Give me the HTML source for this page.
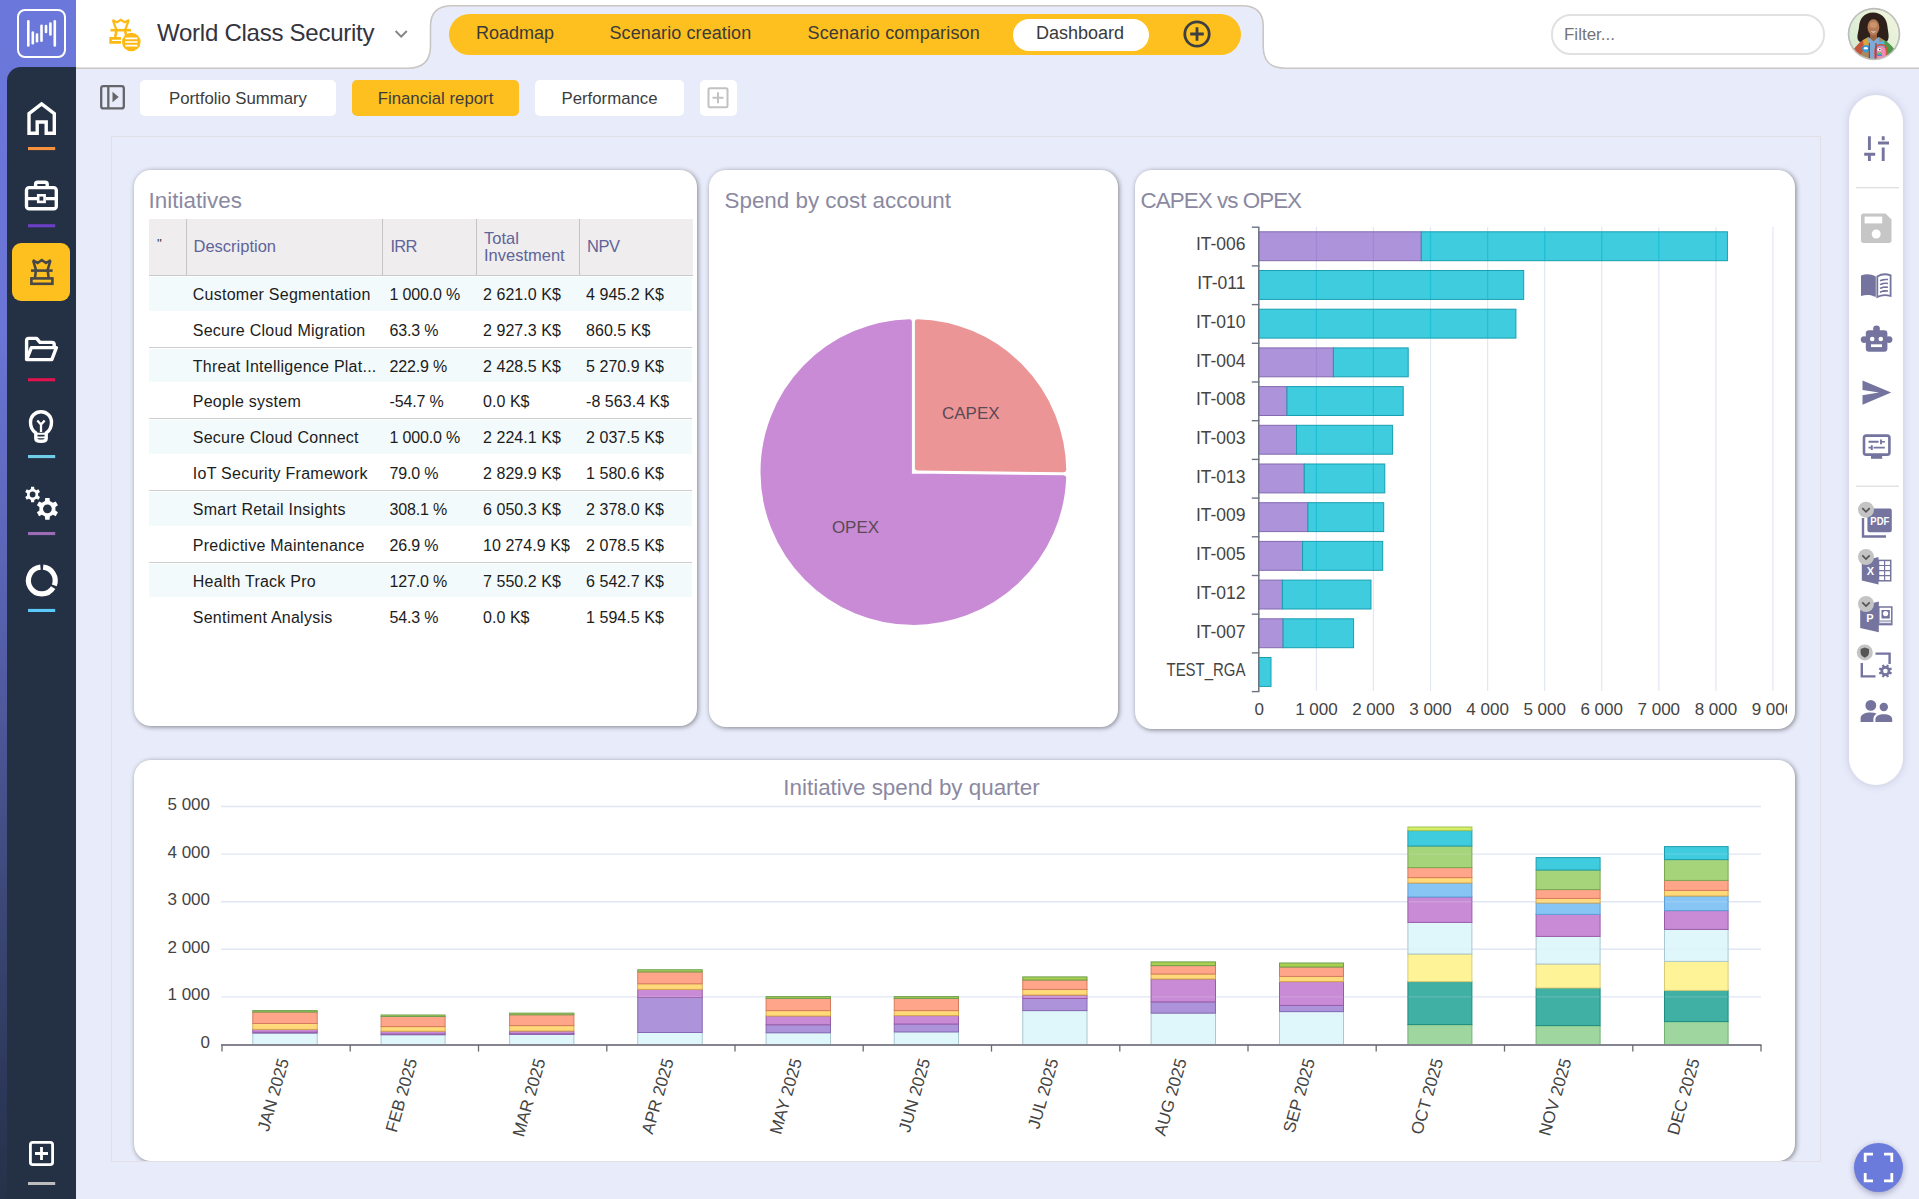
<!DOCTYPE html>
<html lang="en"><head><meta charset="utf-8"><title>World Class Security - Dashboard</title>
<style>
*{box-sizing:border-box;margin:0;padding:0}
html,body{width:1919px;height:1199px;overflow:hidden}
body{background:#e8ebfa;font-family:"Liberation Sans",sans-serif;color:#222;position:relative}
.abs{position:absolute}
#leftstrip{left:0;top:0;width:76px;height:1199px;background:linear-gradient(180deg,#6b77da 0%,#6a75d5 28%,#5962b0 50%,#3d4878 75%,#2b3757 92%,#263248 100%)}
#navpanel{left:7px;top:67px;width:69px;height:1132px;background:#243043;border-top-left-radius:14px}
#logo{left:17px;top:9px;width:49px;height:49px;border:2px solid #fff;border-radius:8px}
#header{left:76px;top:0;width:1843px;height:68px;background:#fff}
#title{left:157px;top:18px;font-size:24px;color:#34343e;white-space:nowrap;letter-spacing:-0.25px;line-height:30px}
.navitem{font-size:18px;color:#3a3a3a;white-space:nowrap;line-height:22px;top:22px}
#pill{left:448.8px;top:14.4px;width:792.6px;height:41.1px;border-radius:20.6px;background:#fdc01e}
#dash{left:1012.8px;top:18.6px;width:136.2px;height:32.8px;border-radius:16.4px;background:#fff}
#filter{left:1550.6px;top:13.7px;width:274px;height:41px;border:2px solid #e1e1e1;border-radius:20px;background:#fff}
#filter span{position:absolute;left:11.4px;top:9px;font-size:17px;color:#757575}
.tab{top:79.6px;height:36.8px;border-radius:5px;background:#fff;font-size:16.8px;color:#3c3c3c;text-align:center;line-height:38.2px;white-space:nowrap}
.tab.act{background:#fdc01e}
#container{left:111px;top:136px;width:1710px;height:1026px;border:1px solid #e1e1e5;background:#e8ebfa;overflow:hidden}
.card{background:#fff;border-radius:17px;box-shadow:1px 1px 5px rgba(0,0,0,.45)}
.ctitle{font-size:22.4px;color:#8b89a1;white-space:nowrap;line-height:26px}
#rtool{left:1849px;top:95px;width:54px;height:690px;border-radius:27px;background:#fff;box-shadow:0 0 9px rgba(110,110,150,.28)}
#fab{left:1854px;top:1143px;width:49px;height:49px;border-radius:25px;background:#6b7bdb;box-shadow:0 2px 6px rgba(60,60,100,.4)}
.ul{left:27px;width:28px;height:3px}
table{border-collapse:collapse}
.th{position:absolute;font-size:16.5px;color:#5f6499;line-height:17px;white-space:nowrap}
.tr{position:absolute;left:15px;width:543px}
.td{position:absolute;font-size:16px;color:#1c1c1c;white-space:nowrap;line-height:20px}
.td.n{letter-spacing:.05px}.td.t{letter-spacing:.25px}.td.p{letter-spacing:-.18px}
svg text{font-family:"Liberation Sans",sans-serif}
</style></head><body>
<div id="leftstrip" class="abs"></div>
<div id="navpanel" class="abs"></div>
<div id="logo" class="abs"></div>
<svg class="abs" style="left:0;top:0" width="76" height="68"><rect x="27.0" y="20.0" width="2.6" height="26.8" rx="1.3" fill="#fff"/><rect x="31.5" y="31.2" width="2.6" height="13.4" rx="1.3" fill="#fff"/><rect x="35.7" y="33.3" width="2.6" height="9.2" rx="1.3" fill="#fff"/><rect x="40.2" y="24.6" width="2.6" height="17.4" rx="1.3" fill="#fff"/><rect x="44.7" y="24.8" width="2.6" height="8.5" rx="1.3" fill="#fff"/><rect x="49.1" y="22.3" width="2.6" height="13.4" rx="1.3" fill="#fff"/><rect x="53.5" y="20.0" width="2.6" height="26.8" rx="1.3" fill="#fff"/></svg>
<div id="header" class="abs"></div>
<svg class="abs" style="left:0;top:0" width="1919" height="72">
<path d="M76,68.2 L408,68.2 C424,68.2 430.5,60 430.5,46 L430.5,26 C430.5,12 438,5.8 452,5.8 L1242,5.8 C1256,5.8 1263.2,12 1263.2,26 L1263.2,46 C1263.2,60 1269,68.2 1285,68.2 L1919,68.2 L1919,72 L76,72 Z" fill="#e8ebfa"/>
<path d="M76,68.2 L408,68.2 C424,68.2 430.5,60 430.5,46 L430.5,26 C430.5,12 438,5.8 452,5.8 L1242,5.8 C1256,5.8 1263.2,12 1263.2,26 L1263.2,46 C1263.2,60 1269,68.2 1285,68.2 L1919,68.2" fill="none" stroke="#c9c6c3" stroke-width="1.6"/>
</svg>
<svg class="abs" style="left:105px;top:14px" width="40" height="40" viewBox="105 14 40 40">
<g fill="none" stroke="#fdb913" stroke-width="2.6" stroke-linejoin="miter">
<path d="M113,20.600 L116.300,29.500 M128.600,20.600 L125.300,29.500 M112.400,20 L117,22.300 L120.800,19.900 L124.600,22.300 L129.200,20" stroke-width="2.200"/>
<path d="M110.5,30.2 L131,30.2"/>
<path d="M116.4,31 L115,38.2 M125,31 L126.4,36"/>
<path d="M121,38.4 L110.6,38.4 L110.6,42.4 L121,42.4"/>
</g>
<circle cx="131.3" cy="42" r="9.3" fill="#fdb913"/>
<g stroke="#fff" stroke-width="1.7"><path d="M125.2,38.4H137.4M125,42H137.6M125.2,45.6H137.4"/></g>
</svg>
<div id="title" class="abs">World Class Security</div>
<svg class="abs" style="left:393px;top:27px" width="16" height="14"><path d="M2.600,4 L8.200,9.600 L13.800,4" fill="none" stroke="#858585" stroke-width="2"/></svg>
<div id="pill" class="abs"></div><div id="dash" class="abs"></div>
<div class="abs navitem" style="left:476px">Roadmap</div>
<div class="abs navitem" style="left:609.5px;letter-spacing:.1px">Scenario creation</div>
<div class="abs navitem" style="left:807.5px;letter-spacing:.18px">Scenario comparison</div>
<div class="abs navitem" style="left:1036px">Dashboard</div>
<svg class="abs" style="left:1180.5px;top:18.400px" width="32" height="32"><circle cx="16" cy="16" r="12.200" fill="none" stroke="#3d4043" stroke-width="2.800"/><path d="M16,9.200V22.800M9.200,16H22.800" stroke="#3d4043" stroke-width="2.800"/></svg>
<div id="filter" class="abs"><span>Filter...</span></div>
<svg class="abs" style="left:1846.6px;top:6.9px" width="54" height="54" viewBox="0 0 54 54">
<defs><clipPath id="av"><circle cx="27" cy="27" r="24.6"/></clipPath>
<linearGradient id="avbg" x1="0" y1="1" x2="1" y2="0"><stop offset="0" stop-color="#cfe9cf"/><stop offset="1" stop-color="#f5f6dd"/></linearGradient></defs>
<circle cx="27" cy="27" r="26.3" fill="#bdbdbd"/>
<g clip-path="url(#av)">
<rect width="54" height="54" fill="url(#avbg)"/>
<path d="M26,5.600 C35,5.600 40,12 40.500,20 C41,25 42.500,29 41,33 C39,37 33,37 26.500,37 C20,37 13,37 11,33 C9.500,29 11.500,25 12,20 C12.500,12 17,5.600 26,5.600Z" fill="#2e211b"/>
<rect x="23" y="26" width="7" height="8" fill="#9a6544"/>
<ellipse cx="26.400" cy="20.300" rx="5.900" ry="8.100" fill="#b57c57"/>
<ellipse cx="26.400" cy="18" rx="3.600" ry="3" fill="#c9946c"/>
<path d="M23.800,24.300 Q26.400,26.800 29,24.300 Q26.400,25.200 23.800,24.300Z" fill="#fff"/>
<path d="M7,42 C12,36 18,31 21.500,30 L26.500,34.500 L31.500,30 C35,31 42,36 47,42 L47,54 L7,54 Z" fill="#a8895f"/>
<path d="M21.500,30 L26.500,34.500 L31.500,30 L33,37 L29,54 L24,54 L20,37 Z" fill="#7fa9d6"/>
<path d="M7,42 C10,38 13,35 16,33 L18,41 L12,50 Z" fill="#c4553c"/>
<path d="M47,42 C44,38 41,35 37,33 L36,40 L42,49 Z" fill="#4f9a4a"/>
<path d="M31,36 L37,33 L38,40 L32,42Z" fill="#58b4dc"/>
<path d="M16,33 L21,31 L22,38 L17,41Z" fill="#d9a63c"/>
<circle cx="18.800" cy="41.600" r="3.600" fill="#2f9fe0"/><ellipse cx="18.800" cy="41.300" rx="2" ry="1.300" fill="#fff"/>
<path d="M29.500,54 L29.500,43 C29.500,38 38.500,38 38.500,43 L38.500,54Z" fill="#f08ab0"/>
<path d="M28,54 L28,43 C28,36 40,36 40,43 L40,54" fill="none" stroke="#d94f3c" stroke-width="1.400"/>
<ellipse cx="32.400" cy="42.600" rx="2" ry="1.700" fill="#fff"/><circle cx="32.800" cy="42.600" r=".8" fill="#333"/>
<rect x="30" y="45.500" width="5" height="3.500" fill="#5cc46a"/><rect x="30" y="47.500" width="5" height="1.500" fill="#4a7fe0"/>
<path d="M22.300,36 V54 M29,36 V54" stroke="#9a2f3a" stroke-width="1.100"/>
</g></svg>
<svg class="abs" style="left:98px;top:83px" width="30" height="28"><rect x="3.2" y="3.2" width="22.6" height="22.2" rx="2.2" fill="none" stroke="#636569" stroke-width="2.3"/><path d="M10.3,3V25.4" stroke="#666" stroke-width="2.3"/><path d="M14.5,8.7 L20.7,14 L14.5,19.3Z" fill="#666"/></svg>
<div class="abs tab" style="left:140px;width:196px">Portfolio Summary</div>
<div class="abs tab act" style="left:352px;width:167px">Financial report</div>
<div class="abs tab" style="left:535px;width:149px">Performance</div>
<div class="abs tab" style="left:700px;width:36.5px"></div>
<svg class="abs" style="left:706px;top:86px" width="24" height="24"><rect x="2.5" y="2.300" width="19" height="19" rx="1.500" fill="none" stroke="#c2c2c2" stroke-width="2"/><path d="M12,6.300V17.300M6.500,11.800H17.500" stroke="#c2c2c2" stroke-width="2"/></svg>
<svg class="abs" style="left:0;top:68px" width="76" height="1131" viewBox="0 68 76 1131">
<path d="M29,133.2 V113.6 L41.6,103.8 L54.3,113.6 V133.2 H46.2 V122 H37.2 V133.2 Z" fill="none" stroke="#fff" stroke-width="3.4" stroke-linejoin="miter"/>
<g fill="none" stroke="#fff" stroke-width="3.4"><rect x="26.5" y="187.6" width="29.8" height="21.2" rx="2.6"/><path d="M35.6,187 V184.2 C35.6,182.8 36.4,182.2 37.6,182.2 H45.2 C46.4,182.2 47.2,182.8 47.2,184.2 V187"/><path d="M27,198.6 H37 M46,198.6 H56"/><rect x="38.2" y="195.3" width="6.4" height="6.6" stroke-width="2.6"/></g>
<rect x="12" y="243" width="58" height="58" rx="9" fill="#fdc01e"/>
<g fill="none" stroke="#474747" stroke-width="2.6"><path d="M33.2,260.6 L36,270 M50.4,260.6 L47.6,270 M32.8,260 L37.6,263 L41.8,260 L46,263 L50.8,260"/><path d="M31,270.6 H52.6"/><path d="M35.8,271.4 L35,277.6 M47.8,271.4 L48.6,277.6"/><rect x="31.4" y="278.4" width="21" height="5.4"/></g>
<g fill="none" stroke="#fff" stroke-width="3.4" stroke-linejoin="round"><path d="M26.6,359.6 V340.6 C26.6,339.2 27.4,338.4 28.8,338.4 H36.6 L40,342.4 H52 C53.4,342.4 54.2,343.2 54.2,344.6 V347.4"/><path d="M26.6,359.6 L31.4,347.6 H56.4 L51.8,359.6 Z"/></g>
<g fill="none" stroke="#fff" stroke-width="3.4" stroke-width="3"><path d="M35.8,433 C32,430.5 30.5,427 30.5,422.3 C30.5,416.3 35.2,411.8 41,411.8 C46.8,411.8 51.5,416.3 51.5,422.3 C51.5,427 50,430.5 46.2,433 V438.4 C46.2,440.3 44.5,441.2 41,441.2 C37.5,441.2 35.8,440.3 35.8,438.4 Z" stroke-linejoin="round"/><path d="M36,433.8 H46 M37,437.4 H45" stroke-width="1.9"/><path d="M41,432 V424.6 M37.3,420.5 L41,424.6 L44.7,420.5" stroke-width="2.3"/></g>
<path d="M31.06,486.85 L34.14,486.85 L34.30,489.06 L36.46,490.30 L38.45,489.34 L39.99,492.01 L38.16,493.26 L38.16,495.74 L39.99,496.99 L38.45,499.66 L36.46,498.70 L34.30,499.94 L34.14,502.15 L31.06,502.15 L30.90,499.94 L28.74,498.70 L26.75,499.66 L25.21,496.99 L27.04,495.74 L27.04,493.26 L25.21,492.01 L26.75,489.34 L28.74,490.30 L30.90,489.06Z M29.70,494.50 a2.90,2.90 0 1,0 5.80,0 a2.90,2.90 0 1,0 -5.80,0Z" fill="#fff" fill-rule="evenodd"/>
<path d="M45.21,497.92 L49.59,497.92 L49.85,500.98 L52.95,502.76 L55.73,501.46 L57.92,505.26 L55.40,507.01 L55.40,510.59 L57.92,512.34 L55.73,516.14 L52.95,514.84 L49.85,516.62 L49.59,519.68 L45.21,519.68 L44.95,516.62 L41.85,514.84 L39.07,516.14 L36.88,512.34 L39.40,510.59 L39.40,507.01 L36.88,505.26 L39.07,501.46 L41.85,502.76 L44.95,500.98Z M43.00,508.80 a4.40,4.40 0 1,0 8.80,0 a4.40,4.40 0 1,0 -8.80,0Z" fill="#fff" fill-rule="evenodd"/>
<path d="M43.15,567.17 A13.4,13.4 0 0,1 54.31,585.30" fill="none" stroke="#fff" stroke-width="5.15"/>
<path d="M53.16,587.60 A13.4,13.4 0 1,1 40.45,567.17" fill="none" stroke="#fff" stroke-width="5.15"/>
<rect x="28" y="147.0" width="27.2" height="3.1" fill="#f5923e"/>
<rect x="28" y="224.2" width="27.2" height="3.1" fill="#6b3fc6"/>
<rect x="28" y="378.2" width="27.2" height="3.1" fill="#e2134f"/>
<rect x="28" y="455.0" width="27.2" height="3.1" fill="#6fcde8"/>
<rect x="28" y="532.0" width="27.2" height="3.1" fill="#9b6bb5"/>
<rect x="28" y="608.9" width="27.2" height="3.1" fill="#5bc8fa"/>
<rect x="30.4" y="1142.4" width="22.2" height="22.2" rx="2.4" fill="none" stroke="#fff" stroke-width="2.8"/><path d="M41.5,1147 V1160 M35,1153.5 H48" stroke="#fff" stroke-width="2.8"/>
<rect x="28" y="1182" width="27.2" height="3" fill="#bdbdbd"/>
</svg>
<div id="rtool" class="abs"></div>
<svg class="abs" style="left:1849px;top:95px" width="54" height="690" viewBox="1849 95 54 690">
<g stroke="#74749f" stroke-width="2.9" fill="none"><path d="M1869.4,136.2 V150 M1869.4,155 V161 M1864.2,154.2 H1875.2 M1883.2,136.2 V140.2 M1883.2,147.4 V161 M1878,143 H1889"/></g>
<rect x="1856" y="187" width="43" height="1.3" fill="#dedede"/>
<path d="M1863.5,213.5 H1885.5 L1891.5,219.5 V240.5 C1891.5,242 1890.5,243 1889,243 H1863.5 C1862,243 1861,242 1861,240.5 V216 C1861,214.500 1862,213.500 1863.500,213.500 Z" fill="#c6c6c6"/><rect x="1864.600" y="216.600" width="17.600" height="6.800" fill="#fff"/><circle cx="1876.200" cy="234" r="4.500" fill="#fff"/>
<path d="M1861,275.5 C1866,273.500 1871,273.800 1875.800,276.500 V297 C1871,294.600 1866,294.400 1861,296 Z" fill="#74749f"/><path d="M1877.300,276.500 C1881.500,273.900 1886,273.600 1890.600,275.400 V296 C1886,294.500 1881.500,294.700 1877.300,297 Z" fill="none" stroke="#74749f" stroke-width="1.800"/><g stroke="#74749f" stroke-width="1.500"><path d="M1880,280.800 C1882.500,279.600 1885,279.200 1888,279.600 M1880,284.600 C1882.500,283.400 1885,283 1888,283.400 M1880,288.400 C1882.500,287.200 1885,286.800 1888,287.200 M1880,292.200 C1882.500,291 1885,290.600 1888,291"/></g>
<g fill="#74749f"><circle cx="1876.5" cy="329" r="3.4"/><rect x="1865.8" y="330.2" width="21.6" height="21.6" rx="3.2"/><circle cx="1864.2" cy="339.6" r="3.4"/><circle cx="1889" cy="339.6" r="3.4"/></g><circle cx="1872.2" cy="339" r="2.3" fill="#fff"/><circle cx="1880.800" cy="339" r="2.300" fill="#fff"/><rect x="1871" y="344.300" width="11" height="2.800" fill="#fff"/>
<path d="M1862.500,380.400 L1891.200,392.600 L1862.500,404.800 L1862.500,395.200 L1879,392.600 L1862.500,390 Z" fill="#74749f"/>
<g fill="none" stroke="#74749f"><rect x="1864" y="435.6" width="25.4" height="19" rx="2.2" stroke-width="2.6"/><path d="M1868.5,441.800 H1878.600 M1868.500,447.600 H1871 M1873.500,447.600 H1884.800" stroke-width="1.900"/><path d="M1881,439.400 V444.200 M1871.800,445.200 V450" stroke-width="1.900"/><path d="M1882,441.800 H1884.800" stroke-width="1.600"/></g><rect x="1871" y="455" width="11.200" height="3.800" fill="#74749f"/>
<rect x="1856" y="485.600" width="43" height="1.300" fill="#dedede"/>
<rect x="1867.400" y="508.600" width="24.400" height="23.600" rx="2.200" fill="#74749f"/><path d="M1863,518 V536.500 H1886" fill="none" stroke="#74749f" stroke-width="2.400"/><text x="1879.800" y="525.200" font-size="10.500" font-weight="bold" fill="#fff" text-anchor="middle" textLength="19" lengthAdjust="spacingAndGlyphs">PDF</text>
<path d="M1861.800,561.200 L1878.500,557 V584.400 L1861.800,580.600 Z" fill="#74749f"/><rect x="1878.500" y="560.400" width="12.200" height="20.400" fill="none" stroke="#74749f" stroke-width="1.500"/><path d="M1878.500,565.500 H1890.700 M1878.500,570.600 H1890.700 M1878.500,575.700 H1890.700 M1884.600,560.400 V580.800" stroke="#74749f" stroke-width="1.200"/><text x="1870.400" y="575.400" font-size="11" font-weight="bold" fill="#fff" text-anchor="middle">X</text>
<path d="M1860.200,606.200 L1878.800,601.600 V632.200 L1860.200,628 Z" fill="#74749f"/><rect x="1878.800" y="607" width="13" height="17.600" fill="none" stroke="#74749f" stroke-width="1.500"/><path d="M1881.500,610 H1889.800 V618.500 H1881.500Z" fill="#74749f"/><circle cx="1885.600" cy="613.600" r="2.600" fill="#fff"/><path d="M1879.500,621 H1891 M1879.500,623.300 H1891" stroke="#74749f" stroke-width="1"/><text x="1869.800" y="621.600" font-size="11" font-weight="bold" fill="#fff" text-anchor="middle">P</text>
<path d="M1875.500,653.600 H1889.600 V664 M1861.800,663 V676.400 H1875.500" fill="none" stroke="#74749f" stroke-width="2.400"/><path d="M1892.02,672.57 L1891.21,674.54 L1889.45,673.93 L1888.35,675.04 L1888.97,676.79 L1887.01,677.61 L1886.20,675.94 L1884.63,675.94 L1883.83,677.62 L1881.86,676.81 L1882.47,675.05 L1881.36,673.95 L1879.61,674.57 L1878.79,672.61 L1880.46,671.80 L1880.46,670.23 L1878.78,669.43 L1879.59,667.46 L1881.35,668.07 L1882.45,666.96 L1881.83,665.21 L1883.79,664.39 L1884.60,666.06 L1886.17,666.06 L1886.97,664.38 L1888.94,665.19 L1888.33,666.95 L1889.44,668.05 L1891.19,667.43 L1892.01,669.39 L1890.34,670.20 L1890.34,671.77Z M1883.10,671.00 a2.30,2.30 0 1,0 4.60,0 a2.30,2.30 0 1,0 -4.60,0Z" fill="#74749f" fill-rule="evenodd"/>
<g fill="#74749f"><circle cx="1870.800" cy="705.400" r="5.400"/><path d="M1860.600,722 V718.500 C1860.600,714.500 1865,712.600 1870.800,712.600 C1873,712.600 1875,712.900 1876.600,713.500 C1874.400,715 1873.400,716.800 1873.400,719 V722 Z"/><circle cx="1883.800" cy="707" r="4.200"/><path d="M1875.400,722 V719.400 C1875.400,716 1879,714.200 1883.800,714.200 C1888.600,714.200 1892.200,716 1892.200,719.400 V722 Z"/></g>
<circle cx="1866" cy="509.7" r="8" fill="#c4c4c4"/><path d="M1862.300,508.1 L1866,511.8 L1869.700,508.1" fill="none" stroke="#555" stroke-width="1.700"/>
<circle cx="1866" cy="557.0" r="8" fill="#c4c4c4"/><path d="M1862.300,555.4 L1866,559.1 L1869.700,555.4" fill="none" stroke="#555" stroke-width="1.700"/>
<circle cx="1866" cy="604.0" r="8" fill="#c4c4c4"/><path d="M1862.300,602.4 L1866,606.1 L1869.700,602.4" fill="none" stroke="#555" stroke-width="1.700"/>
<circle cx="1864.800" cy="652.400" r="8" fill="#c4c4c4"/><path d="M1864.800,647.400 L1869,649 V652.600 C1869,655.200 1867.200,656.900 1864.800,657.700 C1862.400,656.900 1860.600,655.200 1860.600,652.600 V649 Z" fill="#555"/>
</svg>
<div id="fab" class="abs"></div>
<svg class="abs" style="left:1854px;top:1143px" width="49" height="49" viewBox="1854 1143 49 49"><path d="M1865.200,1162 V1154.200 H1873 M1884,1154.200 H1891.800 V1162 M1891.800,1173 V1180.800 H1884 M1873,1180.800 H1865.200 V1173" fill="none" stroke="#fff" stroke-width="2.800"/></svg>
<div id="container" class="abs">
<div class="abs card" style="left:22px;top:33px;width:563px;height:556px;"><div class="abs ctitle" style="left:14.6px;top:18px">Initiatives</div>
<div class="abs" style="left:15px;top:49px;width:544px;height:57.2px;background:#efedee;border-bottom:1.4px solid #c9c9c9"></div>
<div class="abs" style="left:52px;top:49px;width:1px;height:56px;background:#c4c4c4"></div><div class="abs" style="left:248px;top:49px;width:1px;height:56px;background:#c4c4c4"></div><div class="abs" style="left:342px;top:49px;width:1px;height:56px;background:#c4c4c4"></div><div class="abs" style="left:445px;top:49px;width:1px;height:56px;background:#c4c4c4"></div>
<div class="th" style="left:23px;top:65px;font-size:13.5px;color:#3a3a3a">"</div><div class="th" style="left:59.5px;top:68px">Description</div><div class="th" style="left:256.5px;top:68px;letter-spacing:-.8px">IRR</div><div class="th" style="left:350px;top:59.5px">Total<br>Investment</div><div class="th" style="left:453px;top:68px;letter-spacing:-.5px">NPV</div>
<div class="tr" style="top:107px;height:33.7px;background:#f3fafb;"><div class="td t" style="left:43.8px;top:7.85px">Customer Segmentation</div><div class="td p" style="left:240.6px;top:7.85px">1 000.0 %</div><div class="td n" style="left:334px;top:7.85px">2 621.0 K$</div><div class="td n" style="left:437px;top:7.85px">4 945.2 K$</div></div>
<div class="tr" style="top:140.7px;height:37px;background:#fff;border-bottom:1px solid #cdcdcd;"><div class="td t" style="left:43.8px;top:10px">Secure Cloud Migration</div><div class="td p" style="left:240.6px;top:10px">63.3 %</div><div class="td n" style="left:334px;top:10px">2 927.3 K$</div><div class="td n" style="left:437px;top:10px">860.5 K$</div></div>
<div class="tr" style="top:178.7px;height:33.7px;background:#f3fafb;"><div class="td t" style="left:43.8px;top:7.85px">Threat Intelligence Plat...</div><div class="td p" style="left:240.6px;top:7.85px">222.9 %</div><div class="td n" style="left:334px;top:7.85px">2 428.5 K$</div><div class="td n" style="left:437px;top:7.85px">5 270.9 K$</div></div>
<div class="tr" style="top:212.4px;height:37px;background:#fff;border-bottom:1px solid #cdcdcd;"><div class="td t" style="left:43.8px;top:10px">People system</div><div class="td p" style="left:240.6px;top:10px">-54.7 %</div><div class="td n" style="left:334px;top:10px">0.0 K$</div><div class="td n" style="left:437px;top:10px">-8 563.4 K$</div></div>
<div class="tr" style="top:250.4px;height:33.7px;background:#f3fafb;"><div class="td t" style="left:43.8px;top:7.85px">Secure Cloud Connect</div><div class="td p" style="left:240.6px;top:7.85px">1 000.0 %</div><div class="td n" style="left:334px;top:7.85px">2 224.1 K$</div><div class="td n" style="left:437px;top:7.85px">2 037.5 K$</div></div>
<div class="tr" style="top:284.1px;height:37px;background:#fff;border-bottom:1px solid #cdcdcd;"><div class="td t" style="left:43.8px;top:10px">IoT Security Framework</div><div class="td p" style="left:240.6px;top:10px">79.0 %</div><div class="td n" style="left:334px;top:10px">2 829.9 K$</div><div class="td n" style="left:437px;top:10px">1 580.6 K$</div></div>
<div class="tr" style="top:322.1px;height:33.7px;background:#f3fafb;"><div class="td t" style="left:43.8px;top:7.85px">Smart Retail Insights</div><div class="td p" style="left:240.6px;top:7.85px">308.1 %</div><div class="td n" style="left:334px;top:7.85px">6 050.3 K$</div><div class="td n" style="left:437px;top:7.85px">2 378.0 K$</div></div>
<div class="tr" style="top:355.8px;height:37px;background:#fff;border-bottom:1px solid #cdcdcd;"><div class="td t" style="left:43.8px;top:10px">Predictive Maintenance</div><div class="td p" style="left:240.6px;top:10px">26.9 %</div><div class="td n" style="left:334px;top:10px">10 274.9 K$</div><div class="td n" style="left:437px;top:10px">2 078.5 K$</div></div>
<div class="tr" style="top:393.8px;height:33.7px;background:#f3fafb;"><div class="td t" style="left:43.8px;top:7.85px">Health Track Pro</div><div class="td p" style="left:240.6px;top:7.85px">127.0 %</div><div class="td n" style="left:334px;top:7.85px">7 550.2 K$</div><div class="td n" style="left:437px;top:7.85px">6 542.7 K$</div></div>
<div class="tr" style="top:427.5px;height:37px;background:#fff;"><div class="td t" style="left:43.8px;top:10px">Sentiment Analysis</div><div class="td p" style="left:240.6px;top:10px">54.3 %</div><div class="td n" style="left:334px;top:10px">0.0 K$</div><div class="td n" style="left:437px;top:10px">1 594.5 K$</div></div>
</div>
<div class="abs card" style="left:597px;top:33px;width:409px;height:557px;"><div class="abs ctitle" style="left:15.5px;top:18px">Spend by cost account</div>
<svg class="abs" style="left:0;top:0" width="409" height="556">
<path d="M208.40,298.05 L208.40,151.65 A150.40,150.40 0 0,1 354.78,299.84 Z" fill="#ec9596" stroke="#ec9596" stroke-width="5" stroke-linejoin="round"/>
<path d="M200.40,305.95 L354.69,307.84 A150.40,150.40 0 1,1 200.40,151.65 Z" fill="#c98bd5" stroke="#c98bd5" stroke-width="5" stroke-linejoin="round"/>
<text x="261.8" y="249.0" font-size="17" fill="#5a4a55" text-anchor="middle">CAPEX</text><text x="146.5" y="363.0" font-size="17" fill="#5a4a55" text-anchor="middle">OPEX</text></svg>
</div>
<div class="abs card" style="left:1023px;top:33px;width:660px;height:558.8px;"><div class="abs ctitle" style="left:5.5px;top:18px;letter-spacing:-0.95px">CAPEX vs OPEX</div>
<svg class="abs" style="left:0;top:0" width="651.5" height="558" viewBox="1135 170 651.5 558">
<path d="M1316.4,227 V691" stroke="#e3e6f5" stroke-width="1.2"/><path d="M1373.4,227 V691" stroke="#e3e6f5" stroke-width="1.2"/><path d="M1430.5,227 V691" stroke="#e3e6f5" stroke-width="1.2"/><path d="M1487.6,227 V691" stroke="#e3e6f5" stroke-width="1.2"/><path d="M1544.7,227 V691" stroke="#e3e6f5" stroke-width="1.2"/><path d="M1601.7,227 V691" stroke="#e3e6f5" stroke-width="1.2"/><path d="M1658.8,227 V691" stroke="#e3e6f5" stroke-width="1.2"/><path d="M1715.9,227 V691" stroke="#e3e6f5" stroke-width="1.2"/><path d="M1772.9,227 V691" stroke="#e3e6f5" stroke-width="1.2"/>
<rect x="1258.6" y="231.8" width="162.7" height="28.9" fill="#ad94da" stroke="#846aae" stroke-width="1"/><rect x="1421.3" y="231.8" width="306.1" height="28.9" fill="#3fccdf" stroke="#179fb0" stroke-width="1"/><text x="1245.500" y="250.4" font-size="17.500" fill="#444" text-anchor="end">IT-006</text>
<rect x="1258.6" y="270.5" width="265.1" height="28.9" fill="#3fccdf" stroke="#179fb0" stroke-width="1"/><text x="1245.500" y="289.1" font-size="17.500" fill="#444" text-anchor="end">IT-011</text>
<rect x="1258.6" y="309.2" width="257.3" height="28.9" fill="#3fccdf" stroke="#179fb0" stroke-width="1"/><text x="1245.500" y="327.9" font-size="17.500" fill="#444" text-anchor="end">IT-010</text>
<rect x="1258.6" y="347.9" width="74.8" height="28.9" fill="#ad94da" stroke="#846aae" stroke-width="1"/><rect x="1333.4" y="347.9" width="74.8" height="28.9" fill="#3fccdf" stroke="#179fb0" stroke-width="1"/><text x="1245.500" y="366.6" font-size="17.500" fill="#444" text-anchor="end">IT-004</text>
<rect x="1258.6" y="386.6" width="28.4" height="28.9" fill="#ad94da" stroke="#846aae" stroke-width="1"/><rect x="1287.0" y="386.6" width="116.2" height="28.9" fill="#3fccdf" stroke="#179fb0" stroke-width="1"/><text x="1245.500" y="405.2" font-size="17.500" fill="#444" text-anchor="end">IT-008</text>
<rect x="1258.6" y="425.3" width="37.9" height="28.9" fill="#ad94da" stroke="#846aae" stroke-width="1"/><rect x="1296.5" y="425.3" width="96.1" height="28.9" fill="#3fccdf" stroke="#179fb0" stroke-width="1"/><text x="1245.500" y="443.9" font-size="17.500" fill="#444" text-anchor="end">IT-003</text>
<rect x="1258.6" y="464.0" width="45.7" height="28.9" fill="#ad94da" stroke="#846aae" stroke-width="1"/><rect x="1304.3" y="464.0" width="80.5" height="28.9" fill="#3fccdf" stroke="#179fb0" stroke-width="1"/><text x="1245.500" y="482.6" font-size="17.500" fill="#444" text-anchor="end">IT-013</text>
<rect x="1258.6" y="502.7" width="49.3" height="28.9" fill="#ad94da" stroke="#846aae" stroke-width="1"/><rect x="1307.9" y="502.7" width="75.8" height="28.9" fill="#3fccdf" stroke="#179fb0" stroke-width="1"/><text x="1245.500" y="521.4" font-size="17.500" fill="#444" text-anchor="end">IT-009</text>
<rect x="1258.6" y="541.4" width="44.0" height="28.9" fill="#ad94da" stroke="#846aae" stroke-width="1"/><rect x="1302.6" y="541.4" width="80.1" height="28.9" fill="#3fccdf" stroke="#179fb0" stroke-width="1"/><text x="1245.500" y="560.0" font-size="17.500" fill="#444" text-anchor="end">IT-005</text>
<rect x="1258.6" y="580.1" width="23.8" height="28.9" fill="#ad94da" stroke="#846aae" stroke-width="1"/><rect x="1282.4" y="580.1" width="88.6" height="28.9" fill="#3fccdf" stroke="#179fb0" stroke-width="1"/><text x="1245.500" y="598.8" font-size="17.500" fill="#444" text-anchor="end">IT-012</text>
<rect x="1258.6" y="618.8" width="24.5" height="28.9" fill="#ad94da" stroke="#846aae" stroke-width="1"/><rect x="1283.1" y="618.8" width="70.5" height="28.9" fill="#3fccdf" stroke="#179fb0" stroke-width="1"/><text x="1245.500" y="637.5" font-size="17.500" fill="#444" text-anchor="end">IT-007</text>
<rect x="1258.6" y="657.5" width="12.4" height="28.9" fill="#3fccdf" stroke="#179fb0" stroke-width="1"/><text x="1245.500" y="676.2" font-size="17.500" fill="#444" text-anchor="end" textLength="79" lengthAdjust="spacingAndGlyphs">TEST_RGA</text>
<path d="M1316.4,232.3 V260.2" stroke="#6a45b0" stroke-opacity="0.16" stroke-width="1.3"/><path d="M1373.4,232.3 V260.2" stroke="#6a45b0" stroke-opacity="0.16" stroke-width="1.3"/><path d="M1430.5,232.3 V260.2" stroke="#00b6d0" stroke-opacity="0.5" stroke-width="1.3"/><path d="M1487.6,232.3 V260.2" stroke="#00b6d0" stroke-opacity="0.5" stroke-width="1.3"/><path d="M1544.7,232.3 V260.2" stroke="#00b6d0" stroke-opacity="0.5" stroke-width="1.3"/><path d="M1601.7,232.3 V260.2" stroke="#00b6d0" stroke-opacity="0.5" stroke-width="1.3"/><path d="M1658.8,232.3 V260.2" stroke="#00b6d0" stroke-opacity="0.5" stroke-width="1.3"/><path d="M1715.9,232.3 V260.2" stroke="#00b6d0" stroke-opacity="0.5" stroke-width="1.3"/><path d="M1316.4,271.0 V298.9" stroke="#00b6d0" stroke-opacity="0.5" stroke-width="1.3"/><path d="M1373.4,271.0 V298.9" stroke="#00b6d0" stroke-opacity="0.5" stroke-width="1.3"/><path d="M1430.5,271.0 V298.9" stroke="#00b6d0" stroke-opacity="0.5" stroke-width="1.3"/><path d="M1487.6,271.0 V298.9" stroke="#00b6d0" stroke-opacity="0.5" stroke-width="1.3"/><path d="M1316.4,309.7 V337.6" stroke="#00b6d0" stroke-opacity="0.5" stroke-width="1.3"/><path d="M1373.4,309.7 V337.6" stroke="#00b6d0" stroke-opacity="0.5" stroke-width="1.3"/><path d="M1430.5,309.7 V337.6" stroke="#00b6d0" stroke-opacity="0.5" stroke-width="1.3"/><path d="M1487.6,309.7 V337.6" stroke="#00b6d0" stroke-opacity="0.5" stroke-width="1.3"/><path d="M1316.4,348.4 V376.3" stroke="#6a45b0" stroke-opacity="0.16" stroke-width="1.3"/><path d="M1373.4,348.4 V376.3" stroke="#00b6d0" stroke-opacity="0.5" stroke-width="1.3"/><path d="M1316.4,387.1 V415.0" stroke="#00b6d0" stroke-opacity="0.5" stroke-width="1.3"/><path d="M1373.4,387.1 V415.0" stroke="#00b6d0" stroke-opacity="0.5" stroke-width="1.3"/><path d="M1316.4,425.8 V453.7" stroke="#00b6d0" stroke-opacity="0.5" stroke-width="1.3"/><path d="M1373.4,425.8 V453.7" stroke="#00b6d0" stroke-opacity="0.5" stroke-width="1.3"/><path d="M1316.4,464.5 V492.4" stroke="#00b6d0" stroke-opacity="0.5" stroke-width="1.3"/><path d="M1373.4,464.5 V492.4" stroke="#00b6d0" stroke-opacity="0.5" stroke-width="1.3"/><path d="M1316.4,503.2 V531.1" stroke="#00b6d0" stroke-opacity="0.5" stroke-width="1.3"/><path d="M1373.4,503.2 V531.1" stroke="#00b6d0" stroke-opacity="0.5" stroke-width="1.3"/><path d="M1316.4,541.9 V569.8" stroke="#00b6d0" stroke-opacity="0.5" stroke-width="1.3"/><path d="M1373.4,541.9 V569.8" stroke="#00b6d0" stroke-opacity="0.5" stroke-width="1.3"/><path d="M1316.4,580.6 V608.5" stroke="#00b6d0" stroke-opacity="0.5" stroke-width="1.3"/><path d="M1316.4,619.3 V647.2" stroke="#00b6d0" stroke-opacity="0.5" stroke-width="1.3"/>
<path d="M1258.8,227.2 V691.6" stroke="#6e7380" stroke-width="1.5"/><path d="M1251.800,227.2 H1259.400" stroke="#6e7380" stroke-width="1.400"/><path d="M1251.800,265.9 H1259.400" stroke="#6e7380" stroke-width="1.400"/><path d="M1251.800,304.6 H1259.400" stroke="#6e7380" stroke-width="1.400"/><path d="M1251.800,343.3 H1259.400" stroke="#6e7380" stroke-width="1.400"/><path d="M1251.800,382.0 H1259.400" stroke="#6e7380" stroke-width="1.400"/><path d="M1251.800,420.7 H1259.400" stroke="#6e7380" stroke-width="1.400"/><path d="M1251.800,459.4 H1259.400" stroke="#6e7380" stroke-width="1.400"/><path d="M1251.800,498.1 H1259.400" stroke="#6e7380" stroke-width="1.400"/><path d="M1251.800,536.8 H1259.400" stroke="#6e7380" stroke-width="1.400"/><path d="M1251.800,575.5 H1259.400" stroke="#6e7380" stroke-width="1.400"/><path d="M1251.800,614.2 H1259.400" stroke="#6e7380" stroke-width="1.400"/><path d="M1251.800,652.9 H1259.400" stroke="#6e7380" stroke-width="1.400"/><path d="M1251.800,691.6 H1259.400" stroke="#6e7380" stroke-width="1.400"/>
<text x="1259.3" y="715" font-size="17" fill="#444" text-anchor="middle">0</text><text x="1316.4" y="715" font-size="17" fill="#444" text-anchor="middle">1 000</text><text x="1373.4" y="715" font-size="17" fill="#444" text-anchor="middle">2 000</text><text x="1430.5" y="715" font-size="17" fill="#444" text-anchor="middle">3 000</text><text x="1487.6" y="715" font-size="17" fill="#444" text-anchor="middle">4 000</text><text x="1544.7" y="715" font-size="17" fill="#444" text-anchor="middle">5 000</text><text x="1601.7" y="715" font-size="17" fill="#444" text-anchor="middle">6 000</text><text x="1658.8" y="715" font-size="17" fill="#444" text-anchor="middle">7 000</text><text x="1715.9" y="715" font-size="17" fill="#444" text-anchor="middle">8 000</text><text x="1772.9" y="715" font-size="17" fill="#444" text-anchor="middle">9 000</text></svg>
</div>
<div class="abs card" style="left:22px;top:623px;width:1661px;height:401px;"><div class="abs ctitle" style="left:0;top:15px;width:1555px;text-align:center">Initiative spend by quarter</div>
<svg class="abs" style="left:0;top:0" width="1661" height="401" viewBox="134 760 1661 401">
<path d="M221,996.9 H1761" stroke="#e1e6f4" stroke-width="1.4"/><path d="M221,949.3 H1761" stroke="#e1e6f4" stroke-width="1.4"/><path d="M221,901.7 H1761" stroke="#e1e6f4" stroke-width="1.4"/><path d="M221,854.1 H1761" stroke="#e1e6f4" stroke-width="1.4"/><path d="M221,806.5 H1761" stroke="#e1e6f4" stroke-width="1.4"/>
<rect x="252.80" y="1033.10" width="64.40" height="11.40" fill="#dff6fb" stroke="#aac8cf" stroke-width="1"/><rect x="252.80" y="1032.20" width="64.40" height="0.90" fill="#ad94da" stroke="#8768b4" stroke-width="1"/><rect x="252.80" y="1029.40" width="64.40" height="2.80" fill="#c98bd6" stroke="#9a5ca8" stroke-width="1"/><rect x="252.80" y="1023.50" width="64.40" height="5.90" fill="#ffd97a" stroke="#d6a84e" stroke-width="1"/><rect x="252.80" y="1012.00" width="64.40" height="11.50" fill="#ffa68a" stroke="#d67a5c" stroke-width="1"/><rect x="252.80" y="1010.60" width="64.40" height="1.40" fill="#a9d050" stroke="#6fa050" stroke-width="1"/>
<rect x="381.10" y="1034.75" width="64.00" height="9.75" fill="#dff6fb" stroke="#aac8cf" stroke-width="1"/><rect x="381.10" y="1034.00" width="64.00" height="0.75" fill="#ad94da" stroke="#8768b4" stroke-width="1"/><rect x="381.10" y="1031.25" width="64.00" height="2.75" fill="#c98bd6" stroke="#9a5ca8" stroke-width="1"/><rect x="381.10" y="1026.60" width="64.00" height="4.65" fill="#ffd97a" stroke="#d6a84e" stroke-width="1"/><rect x="381.10" y="1016.50" width="64.00" height="10.10" fill="#ffa68a" stroke="#d67a5c" stroke-width="1"/><rect x="381.10" y="1015.00" width="64.00" height="1.50" fill="#a9d050" stroke="#6fa050" stroke-width="1"/>
<rect x="509.60" y="1034.40" width="64.30" height="10.10" fill="#dff6fb" stroke="#aac8cf" stroke-width="1"/><rect x="509.60" y="1033.70" width="64.30" height="0.70" fill="#ad94da" stroke="#8768b4" stroke-width="1"/><rect x="509.60" y="1031.00" width="64.30" height="2.70" fill="#c98bd6" stroke="#9a5ca8" stroke-width="1"/><rect x="509.60" y="1025.60" width="64.30" height="5.40" fill="#ffd97a" stroke="#d6a84e" stroke-width="1"/><rect x="509.60" y="1014.75" width="64.30" height="10.85" fill="#ffa68a" stroke="#d67a5c" stroke-width="1"/><rect x="509.60" y="1013.10" width="64.30" height="1.65" fill="#a9d050" stroke="#6fa050" stroke-width="1"/>
<rect x="637.75" y="1032.50" width="64.50" height="12.00" fill="#dff6fb" stroke="#aac8cf" stroke-width="1"/><rect x="637.75" y="997.50" width="64.50" height="35.00" fill="#ad94da" stroke="#8768b4" stroke-width="1"/><rect x="637.75" y="989.40" width="64.50" height="8.10" fill="#c98bd6" stroke="#9a5ca8" stroke-width="1"/><rect x="637.75" y="983.75" width="64.50" height="5.65" fill="#ffd97a" stroke="#d6a84e" stroke-width="1"/><rect x="637.75" y="971.90" width="64.50" height="11.85" fill="#ffa68a" stroke="#d67a5c" stroke-width="1"/><rect x="637.75" y="969.75" width="64.50" height="2.15" fill="#a9d050" stroke="#6fa050" stroke-width="1"/>
<rect x="766.10" y="1032.75" width="64.40" height="11.75" fill="#dff6fb" stroke="#aac8cf" stroke-width="1"/><rect x="766.10" y="1024.75" width="64.40" height="8.00" fill="#ad94da" stroke="#8768b4" stroke-width="1"/><rect x="766.10" y="1016.00" width="64.40" height="8.75" fill="#c98bd6" stroke="#9a5ca8" stroke-width="1"/><rect x="766.10" y="1010.60" width="64.40" height="5.40" fill="#ffd97a" stroke="#d6a84e" stroke-width="1"/><rect x="766.10" y="998.40" width="64.40" height="12.20" fill="#ffa68a" stroke="#d67a5c" stroke-width="1"/><rect x="766.10" y="996.60" width="64.40" height="1.80" fill="#a9d050" stroke="#6fa050" stroke-width="1"/>
<rect x="894.25" y="1031.90" width="64.25" height="12.60" fill="#dff6fb" stroke="#aac8cf" stroke-width="1"/><rect x="894.25" y="1024.00" width="64.25" height="7.90" fill="#ad94da" stroke="#8768b4" stroke-width="1"/><rect x="894.25" y="1015.60" width="64.25" height="8.40" fill="#c98bd6" stroke="#9a5ca8" stroke-width="1"/><rect x="894.25" y="1010.60" width="64.25" height="5.00" fill="#ffd97a" stroke="#d6a84e" stroke-width="1"/><rect x="894.25" y="998.40" width="64.25" height="12.20" fill="#ffa68a" stroke="#d67a5c" stroke-width="1"/><rect x="894.25" y="996.60" width="64.25" height="1.80" fill="#a9d050" stroke="#6fa050" stroke-width="1"/>
<rect x="1022.75" y="1010.60" width="64.25" height="33.90" fill="#dff6fb" stroke="#aac8cf" stroke-width="1"/><rect x="1022.75" y="998.50" width="64.25" height="12.10" fill="#ad94da" stroke="#8768b4" stroke-width="1"/><rect x="1022.75" y="995.00" width="64.25" height="3.50" fill="#c98bd6" stroke="#9a5ca8" stroke-width="1"/><rect x="1022.75" y="989.40" width="64.25" height="5.60" fill="#ffd97a" stroke="#d6a84e" stroke-width="1"/><rect x="1022.75" y="980.00" width="64.25" height="9.40" fill="#ffa68a" stroke="#d67a5c" stroke-width="1"/><rect x="1022.75" y="976.90" width="64.25" height="3.10" fill="#a9d050" stroke="#6fa050" stroke-width="1"/>
<rect x="1151.10" y="1013.10" width="64.40" height="31.40" fill="#dff6fb" stroke="#aac8cf" stroke-width="1"/><rect x="1151.10" y="1001.90" width="64.40" height="11.20" fill="#ad94da" stroke="#8768b4" stroke-width="1"/><rect x="1151.10" y="979.00" width="64.40" height="22.90" fill="#c98bd6" stroke="#9a5ca8" stroke-width="1"/><rect x="1151.10" y="974.00" width="64.40" height="5.00" fill="#ffd97a" stroke="#d6a84e" stroke-width="1"/><rect x="1151.10" y="965.60" width="64.40" height="8.40" fill="#ffa68a" stroke="#d67a5c" stroke-width="1"/><rect x="1151.10" y="961.90" width="64.40" height="3.70" fill="#a9d050" stroke="#6fa050" stroke-width="1"/>
<rect x="1279.50" y="1011.60" width="64.00" height="32.90" fill="#dff6fb" stroke="#aac8cf" stroke-width="1"/><rect x="1279.50" y="1005.40" width="64.00" height="6.20" fill="#ad94da" stroke="#8768b4" stroke-width="1"/><rect x="1279.50" y="981.60" width="64.00" height="23.80" fill="#c98bd6" stroke="#9a5ca8" stroke-width="1"/><rect x="1279.50" y="976.40" width="64.00" height="5.20" fill="#ffd97a" stroke="#d6a84e" stroke-width="1"/><rect x="1279.50" y="967.00" width="64.00" height="9.40" fill="#ffa68a" stroke="#d67a5c" stroke-width="1"/><rect x="1279.50" y="963.00" width="64.00" height="4.00" fill="#a9d050" stroke="#6fa050" stroke-width="1"/>
<rect x="1407.90" y="1024.60" width="64.00" height="19.90" fill="#9fd6a0" stroke="#72b374" stroke-width="1"/><rect x="1407.90" y="981.60" width="64.00" height="43.00" fill="#40b0a5" stroke="#1d8d80" stroke-width="1"/><rect x="1407.90" y="954.00" width="64.00" height="27.60" fill="#fff398" stroke="#d8cb78" stroke-width="1"/><rect x="1407.90" y="922.40" width="64.00" height="31.60" fill="#dff6fb" stroke="#aac8cf" stroke-width="1"/><rect x="1407.90" y="897.00" width="64.00" height="25.40" fill="#c98bd6" stroke="#9a5ca8" stroke-width="1"/><rect x="1407.90" y="883.00" width="64.00" height="14.00" fill="#87c5f5" stroke="#5c9fd8" stroke-width="1"/><rect x="1407.90" y="877.60" width="64.00" height="5.40" fill="#ffd97a" stroke="#d6a84e" stroke-width="1"/><rect x="1407.90" y="867.60" width="64.00" height="10.00" fill="#ffa68a" stroke="#d67a5c" stroke-width="1"/><rect x="1407.90" y="846.00" width="64.00" height="21.60" fill="#a6d47a" stroke="#7ba852" stroke-width="1"/><rect x="1407.90" y="830.60" width="64.00" height="15.40" fill="#3fccdf" stroke="#1f9dae" stroke-width="1"/><rect x="1407.90" y="827.00" width="64.00" height="3.60" fill="#d2ee6a" stroke="#a4c24c" stroke-width="1"/>
<rect x="1536.10" y="1025.60" width="64.00" height="18.90" fill="#9fd6a0" stroke="#72b374" stroke-width="1"/><rect x="1536.10" y="988.00" width="64.00" height="37.60" fill="#40b0a5" stroke="#1d8d80" stroke-width="1"/><rect x="1536.10" y="964.00" width="64.00" height="24.00" fill="#fff398" stroke="#d8cb78" stroke-width="1"/><rect x="1536.10" y="936.40" width="64.00" height="27.60" fill="#dff6fb" stroke="#aac8cf" stroke-width="1"/><rect x="1536.10" y="914.40" width="64.00" height="22.00" fill="#c98bd6" stroke="#9a5ca8" stroke-width="1"/><rect x="1536.10" y="903.00" width="64.00" height="11.40" fill="#87c5f5" stroke="#5c9fd8" stroke-width="1"/><rect x="1536.10" y="898.40" width="64.00" height="4.60" fill="#ffd97a" stroke="#d6a84e" stroke-width="1"/><rect x="1536.10" y="889.60" width="64.00" height="8.80" fill="#ffa68a" stroke="#d67a5c" stroke-width="1"/><rect x="1536.10" y="870.00" width="64.00" height="19.60" fill="#a6d47a" stroke="#7ba852" stroke-width="1"/><rect x="1536.10" y="857.60" width="64.00" height="12.40" fill="#3fccdf" stroke="#1f9dae" stroke-width="1"/>
<rect x="1664.50" y="1021.60" width="63.60" height="22.90" fill="#9fd6a0" stroke="#72b374" stroke-width="1"/><rect x="1664.50" y="990.40" width="63.60" height="31.20" fill="#40b0a5" stroke="#1d8d80" stroke-width="1"/><rect x="1664.50" y="961.40" width="63.60" height="29.00" fill="#fff398" stroke="#d8cb78" stroke-width="1"/><rect x="1664.50" y="929.40" width="63.60" height="32.00" fill="#dff6fb" stroke="#aac8cf" stroke-width="1"/><rect x="1664.50" y="910.60" width="63.60" height="18.80" fill="#c98bd6" stroke="#9a5ca8" stroke-width="1"/><rect x="1664.50" y="896.00" width="63.60" height="14.60" fill="#87c5f5" stroke="#5c9fd8" stroke-width="1"/><rect x="1664.50" y="890.40" width="63.60" height="5.60" fill="#ffd97a" stroke="#d6a84e" stroke-width="1"/><rect x="1664.50" y="880.40" width="63.60" height="10.00" fill="#ffa68a" stroke="#d67a5c" stroke-width="1"/><rect x="1664.50" y="859.60" width="63.60" height="20.80" fill="#a6d47a" stroke="#7ba852" stroke-width="1"/><rect x="1664.50" y="846.60" width="63.60" height="13.00" fill="#3fccdf" stroke="#1f9dae" stroke-width="1"/>
<path d="M638.2,996.9 H701.8" stroke="#dfe6f6" stroke-opacity="0.2" stroke-width="1.4"/><path d="M1023.2,996.9 H1086.5" stroke="#dfe6f6" stroke-opacity="0.2" stroke-width="1.4"/><path d="M1151.6,996.9 H1215.0" stroke="#dfe6f6" stroke-opacity="0.2" stroke-width="1.4"/><path d="M1280.0,996.9 H1343.0" stroke="#dfe6f6" stroke-opacity="0.2" stroke-width="1.4"/><path d="M1408.4,996.9 H1471.4" stroke="#dfe6f6" stroke-opacity="0.2" stroke-width="1.4"/><path d="M1408.4,949.3 H1471.4" stroke="#dfe6f6" stroke-opacity="0.2" stroke-width="1.4"/><path d="M1408.4,901.7 H1471.4" stroke="#dfe6f6" stroke-opacity="0.2" stroke-width="1.4"/><path d="M1408.4,854.1 H1471.4" stroke="#dfe6f6" stroke-opacity="0.2" stroke-width="1.4"/><path d="M1536.6,996.9 H1599.6" stroke="#dfe6f6" stroke-opacity="0.2" stroke-width="1.4"/><path d="M1536.6,949.3 H1599.6" stroke="#dfe6f6" stroke-opacity="0.2" stroke-width="1.4"/><path d="M1536.6,901.7 H1599.6" stroke="#dfe6f6" stroke-opacity="0.2" stroke-width="1.4"/><path d="M1665.0,996.9 H1727.6" stroke="#dfe6f6" stroke-opacity="0.2" stroke-width="1.4"/><path d="M1665.0,949.3 H1727.6" stroke="#dfe6f6" stroke-opacity="0.2" stroke-width="1.4"/><path d="M1665.0,901.7 H1727.6" stroke="#dfe6f6" stroke-opacity="0.2" stroke-width="1.4"/><path d="M1665.0,854.1 H1727.6" stroke="#dfe6f6" stroke-opacity="0.2" stroke-width="1.4"/>
<path d="M221,1045 H1761.500" stroke="#85858f" stroke-width="1.900"/><path d="M222.0,1045 V1051.600" stroke="#6a6a72" stroke-width="1.300"/><path d="M350.2,1045 V1051.600" stroke="#6a6a72" stroke-width="1.300"/><path d="M478.5,1045 V1051.600" stroke="#6a6a72" stroke-width="1.300"/><path d="M606.8,1045 V1051.600" stroke="#6a6a72" stroke-width="1.300"/><path d="M735.0,1045 V1051.600" stroke="#6a6a72" stroke-width="1.300"/><path d="M863.2,1045 V1051.600" stroke="#6a6a72" stroke-width="1.300"/><path d="M991.5,1045 V1051.600" stroke="#6a6a72" stroke-width="1.300"/><path d="M1119.8,1045 V1051.600" stroke="#6a6a72" stroke-width="1.300"/><path d="M1248.0,1045 V1051.600" stroke="#6a6a72" stroke-width="1.300"/><path d="M1376.2,1045 V1051.600" stroke="#6a6a72" stroke-width="1.300"/><path d="M1504.5,1045 V1051.600" stroke="#6a6a72" stroke-width="1.300"/><path d="M1632.8,1045 V1051.600" stroke="#6a6a72" stroke-width="1.300"/><path d="M1761.0,1045 V1051.600" stroke="#6a6a72" stroke-width="1.300"/>
<text x="210" y="1047.9" font-size="17" fill="#444" text-anchor="end">0</text><text x="210" y="1000.3" font-size="17" fill="#444" text-anchor="end">1 000</text><text x="210" y="952.7" font-size="17" fill="#444" text-anchor="end">2 000</text><text x="210" y="905.1" font-size="17" fill="#444" text-anchor="end">3 000</text><text x="210" y="857.5" font-size="17" fill="#444" text-anchor="end">4 000</text><text x="210" y="809.9" font-size="17" fill="#444" text-anchor="end">5 000</text>
<text transform="translate(289.1,1060.500) rotate(-74)" font-size="17" fill="#444" text-anchor="end">JAN 2025</text><text transform="translate(417.4,1060.500) rotate(-74)" font-size="17" fill="#444" text-anchor="end">FEB 2025</text><text transform="translate(545.6,1060.500) rotate(-74)" font-size="17" fill="#444" text-anchor="end">MAR 2025</text><text transform="translate(673.9,1060.500) rotate(-74)" font-size="17" fill="#444" text-anchor="end">APR 2025</text><text transform="translate(802.1,1060.500) rotate(-74)" font-size="17" fill="#444" text-anchor="end">MAY 2025</text><text transform="translate(930.4,1060.500) rotate(-74)" font-size="17" fill="#444" text-anchor="end">JUN 2025</text><text transform="translate(1058.6,1060.500) rotate(-74)" font-size="17" fill="#444" text-anchor="end">JUL 2025</text><text transform="translate(1186.9,1060.500) rotate(-74)" font-size="17" fill="#444" text-anchor="end">AUG 2025</text><text transform="translate(1315.1,1060.500) rotate(-74)" font-size="17" fill="#444" text-anchor="end">SEP 2025</text><text transform="translate(1443.4,1060.500) rotate(-74)" font-size="17" fill="#444" text-anchor="end">OCT 2025</text><text transform="translate(1571.6,1060.500) rotate(-74)" font-size="17" fill="#444" text-anchor="end">NOV 2025</text><text transform="translate(1699.9,1060.500) rotate(-74)" font-size="17" fill="#444" text-anchor="end">DEC 2025</text></svg>
</div>
</div>
</body></html>
